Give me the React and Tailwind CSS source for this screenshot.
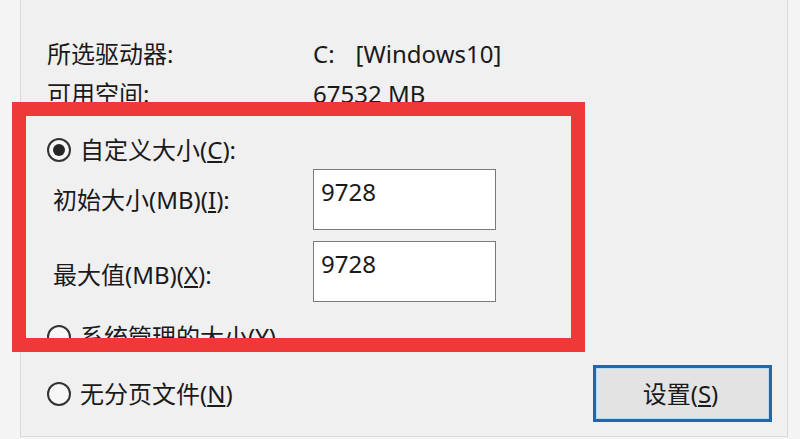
import React from 'react';

const Radio = ({ checked }) => (
  <span className="flex h-[24px] w-[24px] shrink-0 items-center justify-center rounded-full border-2 border-[#333] bg-[#f7f7f7]">
    {checked && <span className="h-[12px] w-[12px] rounded-full bg-[#262626]" />}
  </span>
);

const Key = ({ k }) => (
  <>
    (<span className="underline underline-offset-2">{k}</span>)
  </>
);

const SizeInput = ({ value }) => (
  <div className="h-[61px] w-[183px] border border-[#7a7a7a] bg-white px-[7px] pt-[6px] leading-[32px]">
    {value}
  </div>
);

const App = () => {
  return (
    <div className="relative h-[439px] w-[800px] overflow-hidden bg-[#f4f4f4] font-['Noto_Sans','Noto_Sans_CJK_SC',sans-serif] text-[24px] text-[#1a1a1a]">
      <div className="ml-[20px] flex h-[437px] w-[768px] flex-col border-x border-b border-[#d9d9d9] bg-[#f0f0f0] pl-[26px] pr-[15px]">
        <div className="mt-[34px] flex h-[40px] items-center">
          <span className="w-[266px]">所选驱动器:</span>
          <span>C:</span>
          <span className="ml-[21px]">[Windows10]</span>
        </div>
        <div className="flex h-[40px] items-center">
          <span className="w-[266px]">可用空间:</span>
          <span>67532 MB</span>
        </div>

        <div className="mt-[16px] flex h-[40px] items-center gap-[9px]">
          <Radio checked />
          <span>
            自定义大小<Key k="C" />:
          </span>
        </div>

        <div className="mt-[-1px] flex flex-col gap-[11px]">
          <div className="flex items-center">
            <span className="w-[266px] pl-[6px]">
              初始大小(MB)<Key k="I" />:
            </span>
            <SizeInput value="9728" />
          </div>
          <div className="flex items-center">
            <span className="w-[266px] pl-[6px] pt-[6px]">
              最大值(MB)<Key k="X" />:
            </span>
            <SizeInput value="9728" />
          </div>
        </div>

        <div className="mt-[15px] flex h-[40px] items-center gap-[9px]">
          <Radio />
          <span>
            系统管理的大小<Key k="Y" />
          </span>
        </div>

        <div className="mt-[8px] flex h-[57px] items-center justify-between">
          <div className="flex items-center gap-[9px]">
            <Radio />
            <span>
              无分页文件<Key k="N" />
            </span>
          </div>
          <button className="flex h-[57px] w-[179px] items-center justify-center border-[3px] border-[#2566a8] bg-[#e3e3e3] pr-[4px] text-[#1a1a1a] shadow-[inset_0_0_0_1px_#b6dcf5]">
            设置<Key k="S" />
          </button>
        </div>
      </div>

      <div className="absolute left-[12px] top-[102px] h-[250px] w-[573px] border-[14px] border-[#ef3838]" />
    </div>
  );
};

export default App;
